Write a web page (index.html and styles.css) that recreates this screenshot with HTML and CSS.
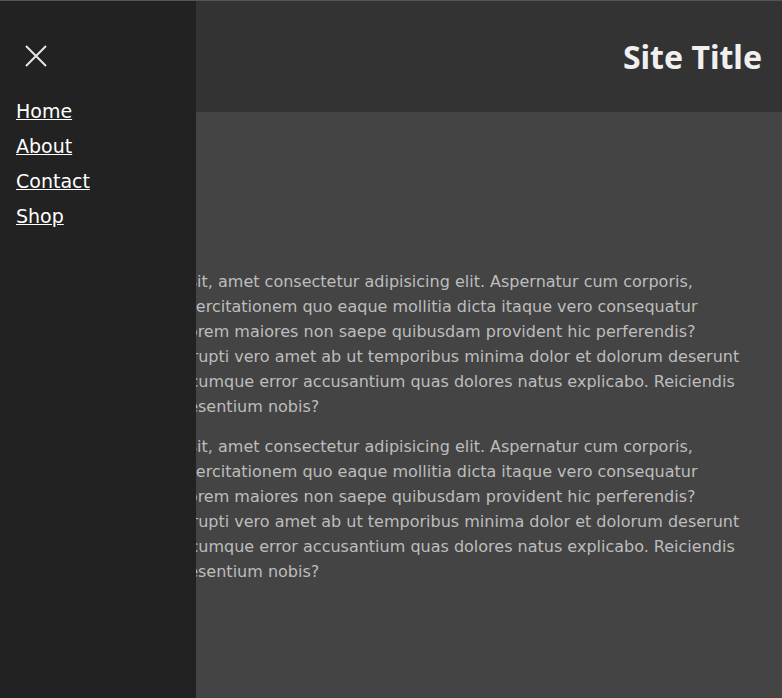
FILE: index.html
```html
<!DOCTYPE html>
<html lang="en">
<head>
<meta charset="utf-8">
<title>Site Title</title>
<link rel="stylesheet" href="styles.css">
</head>
<body>
<header class="site-header">
  <h1 class="site-title">Site Title</h1>
</header>
<main class="content">
  <p class="para">Lorem ipsum dolor sit, amet consectetur adipisicing elit. Aspernatur cum corporis,<br>Nesciunt, quas id exercitationem quo eaque mollitia dicta itaque vero consequatur<br>Ducimus animi, dolorem maiores non saepe quibusdam provident hic perferendis?<br>Ipsam eaque sit corrupti vero amet ab ut temporibus minima dolor et dolorum deserunt<br>Minus nemo, quasi cumque error accusantium quas dolores natus explicabo. Reiciendis<br>Quod nam odio praesentium nobis?</p>
  <p class="para">Lorem ipsum dolor sit, amet consectetur adipisicing elit. Aspernatur cum corporis,<br>Nesciunt, quas id exercitationem quo eaque mollitia dicta itaque vero consequatur<br>Ducimus animi, dolorem maiores non saepe quibusdam provident hic perferendis?<br>Ipsam eaque sit corrupti vero amet ab ut temporibus minima dolor et dolorum deserunt<br>Minus nemo, quasi cumque error accusantium quas dolores natus explicabo. Reiciendis<br>Quod nam odio praesentium nobis?</p>
</main>
<aside class="sidebar">
  <button class="close-btn" aria-label="Close menu">
    <svg width="22" height="22" viewBox="0 0 22 22"><path d="M1 1L21 21M21 1L1 21" stroke="#e6e6e6" stroke-width="2" fill="none"/></svg>
  </button>
  <nav>
    <ul class="nav-list">
      <li><a href="#">Home</a></li>
      <li><a href="#">About</a></li>
      <li><a href="#">Contact</a></li>
      <li><a href="#">Shop</a></li>
    </ul>
  </nav>
</aside>
</body>
</html>
```
FILE: styles.css
```css
* { box-sizing: border-box; }
html, body { margin: 0; padding: 0; }
body {
  background: #444;
  font-family: "DejaVu Sans", sans-serif;
  border-top: 1px solid #555;
  min-height: 698px;
}
.site-header {
  background: #333;
  height: 111px;
  display: flex;
  align-items: center;
  justify-content: flex-end;
  padding: 0 20px 0 0;
}
.site-title {
  margin: 0;
  font-family: "Noto Sans", sans-serif;
  font-weight: 700;
  font-size: 32px;
  color: #f0f0f0;
}
.content {
  padding: 157px 34px 0 34px;
}
.para {
  margin: 0 0 15px;
  font-size: 16px;
  line-height: 25px;
  color: #bdbdbd;
  white-space: nowrap;
}
.sidebar {
  position: fixed;
  top: 1px;
  left: 0;
  bottom: 0;
  width: 196px;
  background: #222;
  padding: 35px 16px 0;
}
.close-btn {
  display: flex;
  align-items: center;
  justify-content: center;
  width: 40px;
  height: 40px;
  padding: 0;
  border: 0;
  background: none;
}
.nav-list {
  list-style: none;
  margin: 18px 0 0;
  padding: 0;
}
.nav-list li {
  font-size: 19px;
  line-height: 35px;
}
.nav-list a {
  color: #fff;
  text-decoration: underline;
}
```
